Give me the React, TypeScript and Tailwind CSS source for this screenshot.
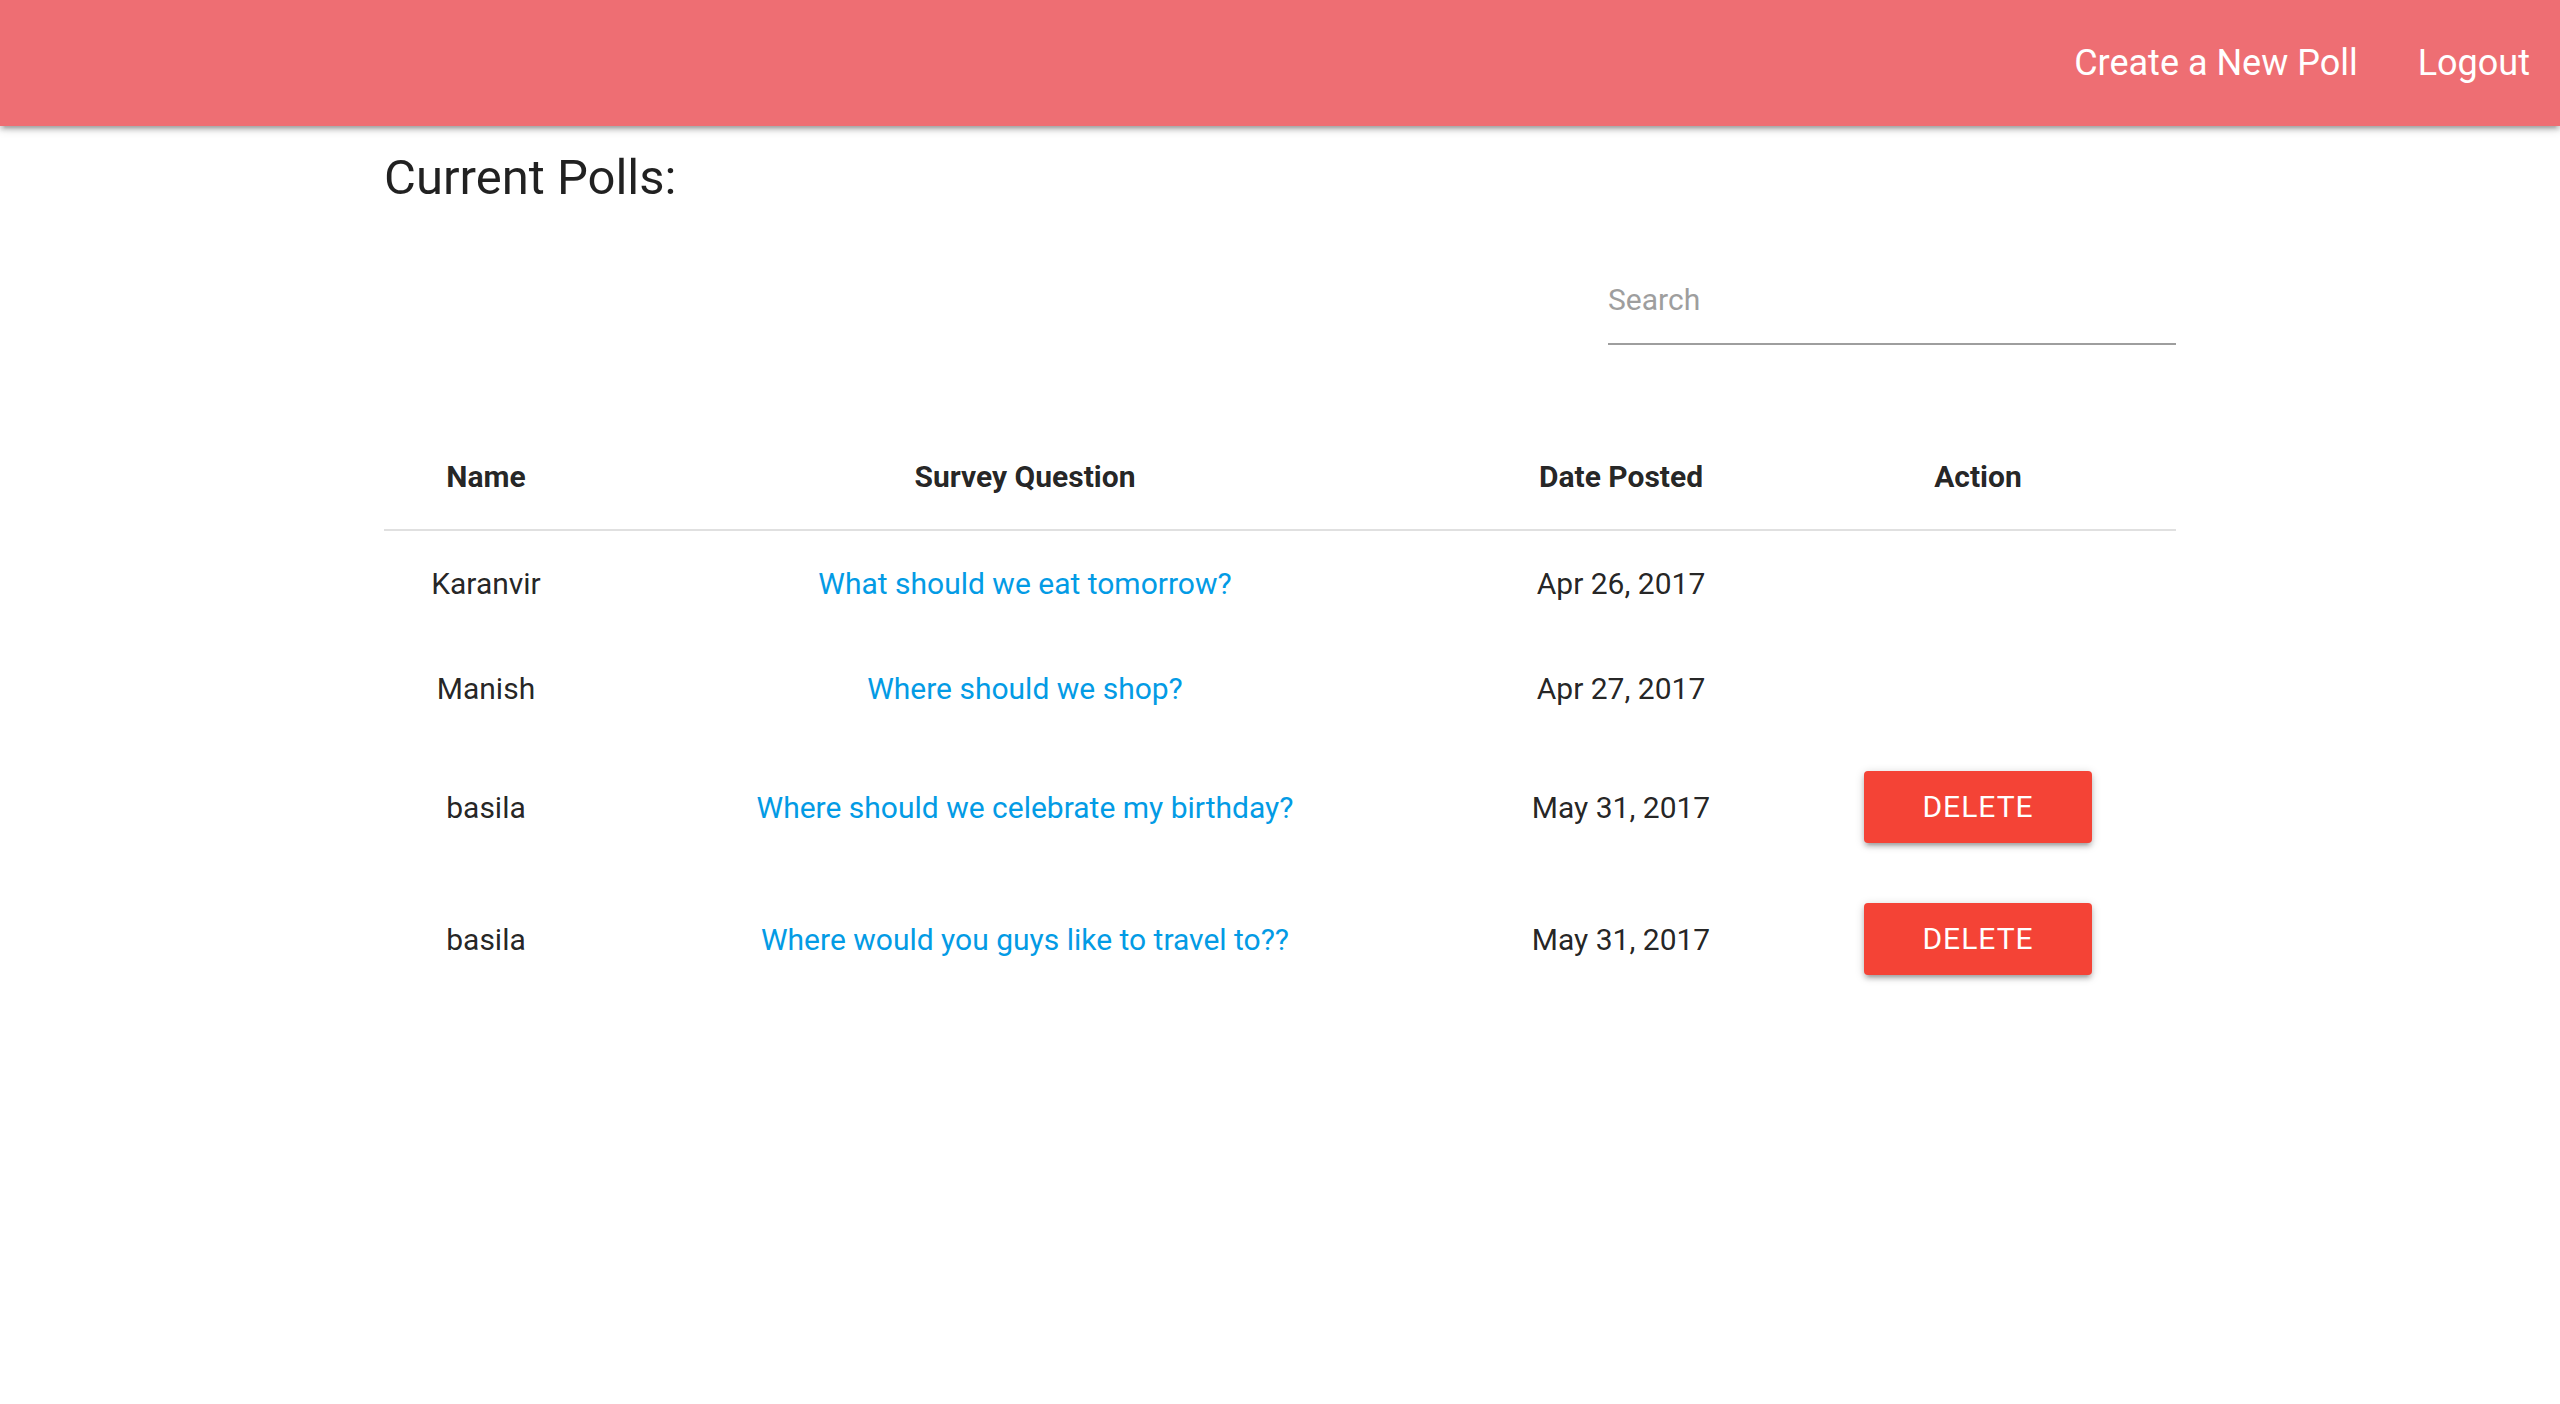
import React from "react";

type Poll = {
    name: string;
    question: string;
    date: string;
    canDelete: boolean;
};

const POLLS: Poll[] = [
    { name: "Karanvir", question: "What should we eat tomorrow?", date: "Apr 26, 2017", canDelete: false },
    { name: "Manish", question: "Where should we shop?", date: "Apr 27, 2017", canDelete: false },
    { name: "basila", question: "Where should we celebrate my birthday?", date: "May 31, 2017", canDelete: true },
    { name: "basila", question: "Where would you guys like to travel to??", date: "May 31, 2017", canDelete: true },
];

const depth1 =
    "shadow-[0_4px_4px_0_rgba(0,0,0,0.14),0_6px_2px_-4px_rgba(0,0,0,0.12),0_2px_10px_0_rgba(0,0,0,0.2)]";

export default function App() {
    return (
        <div className="min-h-[1404px] bg-white font-['Roboto',sans-serif] text-[rgba(0,0,0,0.87)]">
            {/* Navbar */}
            <nav className={`relative z-10 h-[126px] bg-[#ee6e73] ${depth1}`}>
                <ul className="flex h-full items-center justify-end text-[36px] text-white">
                    <li>
                        <a href="#" className="block px-[30px] leading-[126px]">
                            Create a New Poll
                        </a>
                    </li>
                    <li>
                        <a href="#" className="block px-[30px] leading-[126px]">
                            Logout
                        </a>
                    </li>
                </ul>
            </nav>

            <main className="mx-auto w-[70%]">
                <h5 className="mt-[25px] text-[49px] leading-[54px] font-normal">Current Polls:</h5>

                {/* Search */}
                <div className="mt-[50px] flex justify-end">
                    <input
                        type="text"
                        placeholder="Search"
                        className="h-[90px] w-[568px] border-b-2 border-[#9e9e9e] bg-transparent text-[30px] outline-none placeholder:text-[#9e9e9e]"
                    />
                </div>

                {/* Polls table */}
                <table className="mt-[79px] w-full border-collapse text-center text-[30px] leading-[45px]">
                    <colgroup>
                        <col className="w-[204px]" />
                        <col className="w-[874px]" />
                        <col className="w-[318px]" />
                        <col />
                    </colgroup>
                    <thead>
                        <tr className="border-b-2 border-[rgba(0,0,0,0.12)]">
                            <th className="px-[10px] py-[30px] font-bold">Name</th>
                            <th className="px-[10px] py-[30px] font-bold">Survey Question</th>
                            <th className="px-[10px] py-[30px] font-bold">Date Posted</th>
                            <th className="px-[10px] py-[30px] font-bold">Action</th>
                        </tr>
                    </thead>
                    <tbody>
                        {POLLS.map((p, i) => (
                            <tr key={i}>
                                <td className="px-[10px] py-[30px]">{p.name}</td>
                                <td className="px-[10px] py-[30px]">
                                    <a href="#" className="text-[#039be5]">
                                        {p.question}
                                    </a>
                                </td>
                                <td className="px-[10px] py-[30px]">{p.date}</td>
                                <td className="px-[10px] py-[30px]">
                                    {p.canDelete && (
                                        <div className="flex justify-center">
                                            <button
                                                className={`h-[72px] rounded-[4px] bg-[#f44336] px-[58px] text-[30px] leading-[72px] tracking-[1px] text-white uppercase ${depth1}`}
                                            >
                                                Delete
                                            </button>
                                        </div>
                                    )}
                                </td>
                            </tr>
                        ))}
                    </tbody>
                </table>
            </main>
        </div>
    );
}
